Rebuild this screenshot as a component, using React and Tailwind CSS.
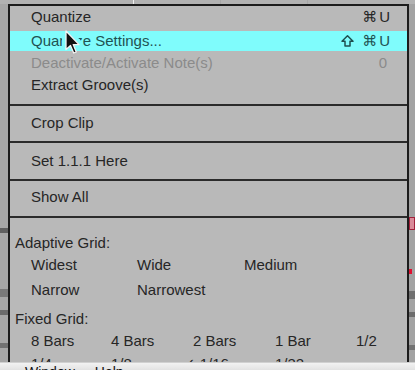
import React from "react";

const font = { fontFamily: '"Liberation Sans", Arial, "DejaVu Sans", sans-serif' };

function Sep() {
  return <div className="h-[2px] bg-[#2b2b2b]" />;
}

function ShiftIcon() {
  return (
    <svg width="13" height="12" viewBox="0 0 13 12" className="mr-[6px]">
      <path d="M6.5 0.8 L12 6.3 L9 6.3 L9 11 L4 11 L4 6.3 L1 6.3 Z" fill="none" stroke="#1f4f4f" strokeWidth="1.5" strokeLinejoin="round" />
    </svg>
  );
}

function Cursor() {
  const d = "M0 0 L0 18.5 L4.5 14.5 L7.7 22 L10.3 21 L7.2 13.6 L13 13.6 Z";
  return (
    <svg
      className="absolute left-[62px] top-[27px]"
      width="24"
      height="32"
      viewBox="-4 -4 24 32"
    >
      <defs>
        <clipPath id="band">
          <rect x="-4" y="0" width="24" height="20" />
        </clipPath>
      </defs>
      <path d={d} fill="#7ffcfc" stroke="#7ffcfc" strokeWidth="8" strokeLinejoin="round" clipPath="url(#band)" />
      <path d={d} fill="#111" stroke="#f4f4f4" strokeWidth="1.3" strokeLinejoin="round" />
    </svg>
  );
}

export default function App() {
  return (
    <div
      className="relative w-[415px] h-[370px] overflow-hidden bg-[#a9a9a9] flex flex-col text-[15px]"
      style={font}
    >
      {/* top strip */}
      <div className="h-[4px] shrink-0 bg-[#b2b2b2] flex">
        <div className="w-[133px]" />
        <div className="w-[1px] bg-[#f0f0f0]" />
        <div className="w-[86px]" />
        <div className="w-[1px] bg-[#a6a6a6]" />
        <div className="w-[86px]" />
        <div className="w-[1px] bg-[#a6a6a6]" />
      </div>

      <div className="flex flex-1 min-h-0">
        {/* left strip */}
        <div className="w-[8px] shrink-0 flex flex-col bg-[#a7a7a7]">
          <div className="h-[224px]" />
          <div className="h-[5px] bg-[#606060]" />
          <div className="h-[56px]" />
          <div className="h-[8px] bg-[#7a7a7a]" />
          <div className="h-[13px]" />
          <div className="h-[5px] bg-[#6c6c6c]" />
          <div className="h-[28px]" />
          <div className="h-[5px] bg-[#727272]" />
        </div>

        {/* menu */}
        <div className="w-[401px] shrink-0 border-t-2 border-x-2 border-[#1c1c1c] bg-[#b9b9b9] overflow-hidden text-[#262626]">
          {/* group 1 */}
          <div className="flex flex-col pb-[8px]">
            <div className="h-[23px] flex items-center justify-between pl-[21px] pr-[17px]">
              <span>Quantize</span>
              <span className="flex items-center gap-[2px]">
                <span style={{ fontFamily: '"DejaVu Sans", sans-serif' }} className="text-[15px]">⌘</span>
                <span>U</span>
              </span>
            </div>
            <div className="mt-[2px] h-[20px] flex items-center justify-between pl-[21px] pr-[17px] bg-[#7ffcfc] text-[#1f5353]">
              <span>Quantize Settings...</span>
              <span className="flex items-center gap-[2px]">
                <ShiftIcon />
                <span style={{ fontFamily: '"DejaVu Sans", sans-serif' }} className="text-[15px]">⌘</span>
                <span>U</span>
              </span>
            </div>
            <div className="mt-[1px] h-[22px] flex items-center justify-between pl-[21px] pr-[20px] text-[#8b8b8b]">
              <span>Deactivate/Activate Note(s)</span>
              <span>0</span>
            </div>
            <div className="h-[22px] flex items-center pl-[21px]">
              <span>Extract Groove(s)</span>
            </div>
          </div>
          <Sep />
          <div className="h-[35px] flex items-center pl-[21px]">Crop Clip</div>
          <Sep />
          <div className="h-[36px] flex items-center pl-[21px]">Set 1.1.1 Here</div>
          <Sep />
          <div className="h-[35px] flex items-center pl-[21px] pb-[2px]">Show All</div>
          <Sep />

          {/* grid section */}
          <div className="flex flex-col pt-[14px]">
            <div className="h-[22px] flex items-center pl-[5px]">Adaptive Grid:</div>
            <div className="h-[21px] grid grid-cols-[106px_107px_106px] items-center pl-[21px]">
              <span>Widest</span>
              <span>Wide</span>
              <span>Medium</span>
            </div>
            <div className="mt-[4px] h-[22px] grid grid-cols-[106px_107px_106px] items-center pl-[21px]">
              <span>Narrow</span>
              <span>Narrowest</span>
            </div>
            <div className="mt-[7px] h-[22px] flex items-center pl-[5px]">Fixed Grid:</div>
            <div className="h-[21px] grid grid-cols-[80px_82px_82px_81px_60px] items-center pl-[21px]">
              <span>8 Bars</span>
              <span>4 Bars</span>
              <span>2 Bars</span>
              <span>1 Bar</span>
              <span>1/2</span>
            </div>
            <div className="mt-[2px] h-[22px] grid grid-cols-[80px_82px_82px_81px_60px] items-center pl-[21px]">
              <span>1/4</span>
              <span>1/8</span>
              <span className="-ml-[10px]">✓ 1/16</span>
              <span>1/32</span>
            </div>
          </div>
        </div>

        {/* right strip */}
        <div className="w-[6px] shrink-0 flex flex-col bg-[#a2a2a2]">
          <div className="h-[213px]" />
          <div className="h-[13px] bg-[#d98a98] border border-[#a0203a]" />
          <div className="h-[39px]" />
          <div className="h-[5px] w-[3px] bg-[#e01030]" />
          <div className="h-[17px]" />
          <div className="h-[8px] bg-[#6f6f6f]" />
          <div className="h-[13px]" />
          <div className="h-[5px] bg-[#6c6c6c]" />
          <div className="h-[28px]" />
          <div className="h-[5px] bg-[#727272]" />
        </div>
      </div>

      {/* bottom menu bar */}
      <div className="h-[8px] shrink-0 overflow-hidden bg-gradient-to-b from-[#f2f2f2] to-[#e2e2e2] border-t border-[#d0d0d0] text-[#111] text-[14px]">
        <div className="flex -mt-[1px] leading-[20px]">
          <span className="ml-[25px]">Window</span>
          <span className="ml-[20px]">Help</span>
        </div>
      </div>

      <Cursor />
    </div>
  );
}
